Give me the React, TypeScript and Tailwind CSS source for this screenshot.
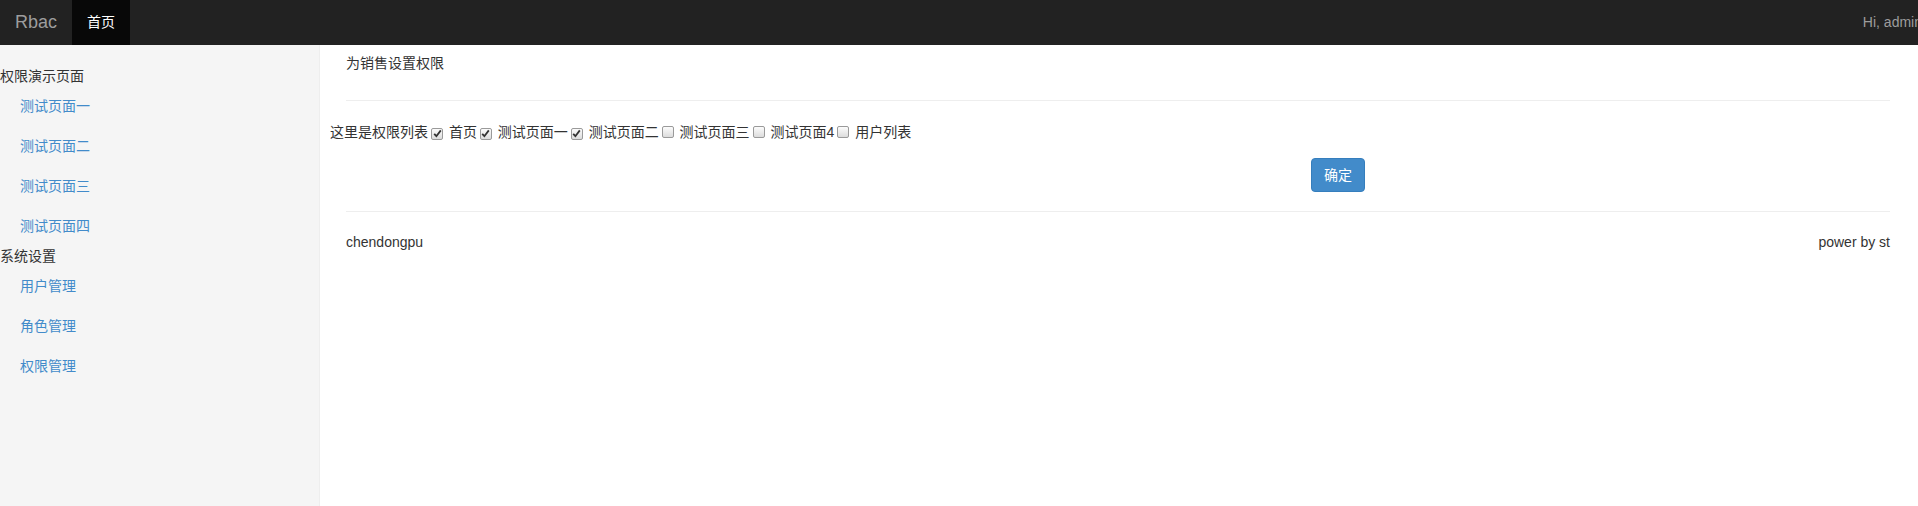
const font = { fontFamily: '"Liberation Sans", Arial, "Noto Sans CJK SC", sans-serif' };

const Box = ({ checked }: { checked: boolean }) => (
  <span className="ml-[3px] mr-[2px] inline-flex h-[12px] w-[12px] items-center justify-center rounded-[2px] border border-[#9a9a9a] bg-gradient-to-b from-[#fcfcfc] to-[#dcdcdc] align-[-1px]">
    {checked && (
      <svg width="9" height="9" viewBox="0 0 9 9">
        <path d="M1.2 4.8 L3.4 7.2 L7.8 1.4" fill="none" stroke="#333" strokeWidth="1.8" />
      </svg>
    )}
  </span>
);

const perms = [
  { name: "首页", on: true },
  { name: "测试页面一", on: true },
  { name: "测试页面二", on: true },
  { name: "测试页面三", on: false },
  { name: "测试页面4", on: false },
  { name: "用户列表", on: false },
];

const groups = [
  { title: "权限演示页面", links: ["测试页面一", "测试页面二", "测试页面三", "测试页面四"] },
  { title: "系统设置", links: ["用户管理", "角色管理", "权限管理"] },
];

export default function App() {
  return (
    <div className="flex h-[506px] w-[1918px] flex-col overflow-hidden bg-white text-[14px] text-[#333]" style={font}>
      <nav className="flex h-[45px] shrink-0 items-stretch bg-[#222]">
        <span className="flex items-center px-[15px] text-[18px] text-[#9d9d9d]">Rbac</span>
        <span className="flex items-center bg-[#080808] px-[15px] text-white">首页</span>
        <span className="ml-auto mr-[-4px] flex items-center whitespace-nowrap text-[#9d9d9d]">Hi, admin</span>
      </nav>
      <div className="flex flex-1">
        <aside className="w-[320px] shrink-0 border-r border-[#eee] bg-[#f5f5f5] pt-[21px]">
          {groups.map((g) => (
            <div key={g.title}>
              <div className="h-[20px] leading-[20px]">{g.title}</div>
              {g.links.map((l) => (
                <div key={l} className="h-[40px] px-[20px] leading-[40px] text-[#428bca]">
                  {l}
                </div>
              ))}
            </div>
          ))}
        </aside>
        <main className="flex-1 pl-[26px] pr-[28px] pt-[8px]">
          <div className="h-[20px] leading-[20px]">为销售设置权限</div>
          <hr className="mt-[27px] border-t border-[#eee]" />
          <div className="-ml-[16px] mt-[21px] h-[20px] whitespace-nowrap leading-[20px]">
            这里是权限列表
            {perms.map((p) => (
              <span key={p.name}>
                <Box checked={p.on} /> {p.name}
              </span>
            ))}
          </div>
          <button className="ml-[965px] mt-[16px] h-[34px] w-[54px] rounded-[4px] border border-[#357ebd] bg-[#428bca] text-[14px] text-white">
            确定
          </button>
          <hr className="mt-[19px] border-t border-[#eee]" />
          <div className="mt-[20px] flex h-[20px] justify-between leading-[20px]">
            <span>chendongpu</span>
            <span>power by st</span>
          </div>
        </main>
      </div>
    </div>
  );
}
